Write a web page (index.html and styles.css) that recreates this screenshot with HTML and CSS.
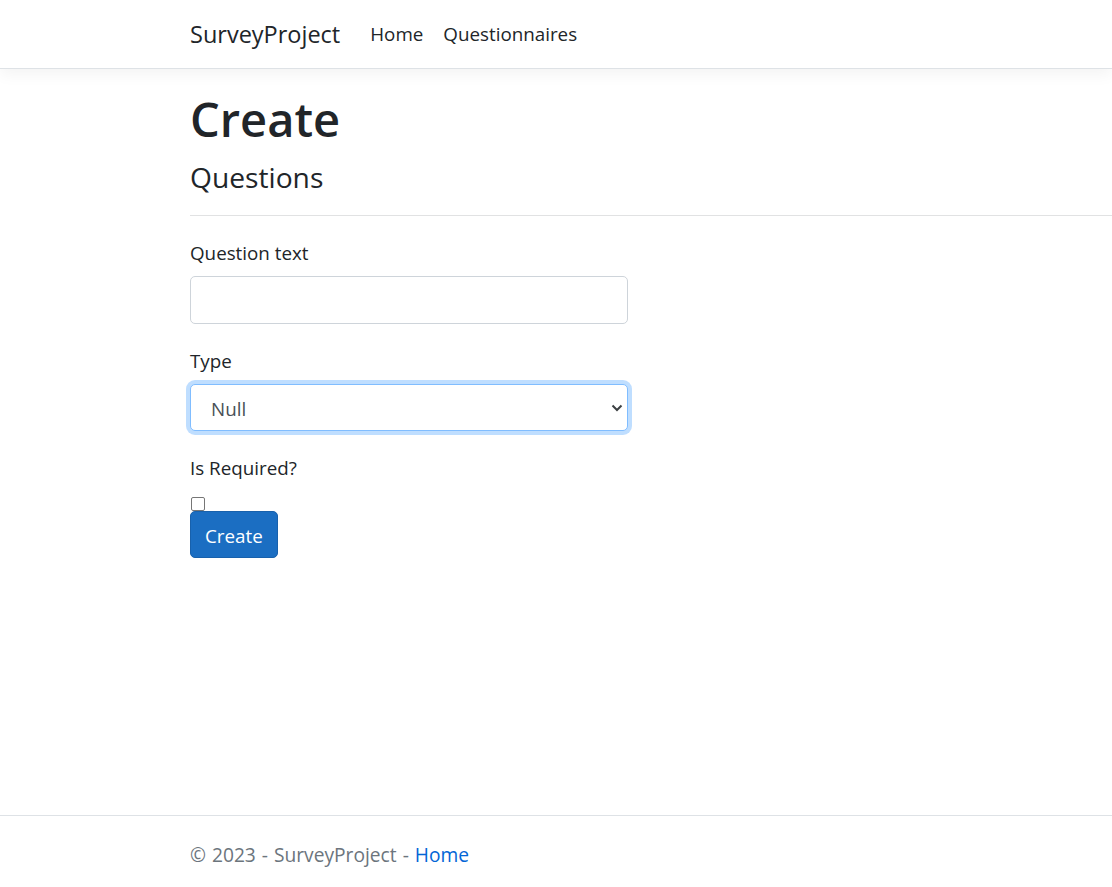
FILE: index.html
```html
<!DOCTYPE html>
<html lang="en">
<head>
<meta charset="utf-8">
<title>Create - SurveyProject</title>
<link rel="stylesheet" href="styles.css">
</head>
<body>
<header class="site-header">
  <nav class="navbar">
    <a class="brand" href="#">SurveyProject</a>
    <ul class="nav-links">
      <li><a class="nav-link" href="#">Home</a></li>
      <li><a class="nav-link" href="#">Questionnaires</a></li>
    </ul>
  </nav>
</header>
<main class="content">
  <h1 class="title">Create</h1>
  <h4 class="subtitle">Questions</h4>
  <hr class="divider">
  <form class="form">
    <div class="form-group">
      <label class="control-label" for="qtext">Question text</label>
      <input class="form-control" id="qtext" type="text">
    </div>
    <div class="form-group">
      <label class="control-label" for="qtype">Type</label>
      <div class="select-wrap">
        <select class="form-control select focused" id="qtype">
          <option>Null</option>
        </select>
        <svg class="chevron" width="12" height="8" viewBox="0 0 12 8"><path d="M1.5 1.5 L6 6 L10.5 1.5" fill="none" stroke="#3c4043" stroke-width="2"/></svg>
      </div>
    </div>
    <div class="form-group last">
      <label class="control-label" for="qreq">Is Required?</label>
      <input class="checkbox" id="qreq" type="checkbox">
      <button class="btn-primary" type="button">Create</button>
    </div>
  </form>
</main>
<footer class="footer">
  <div class="footer-inner">© 2023 - SurveyProject - <a class="footer-link" href="#">Home</a></div>
</footer>
</body>
</html>
```
FILE: styles.css
```css
* { box-sizing: border-box; }
html, body { margin: 0; padding: 0; }
body {
  font-family: "Segoe UI", "Open Sans", "Liberation Sans", sans-serif;
  font-size: 18.8px;
  line-height: 30px;
  color: #212529;
  background: #fff;
  min-height: 100vh;
  display: flex;
  flex-direction: column;
}
a { text-decoration: none; }

.site-header {
  background: #fff;
  border-bottom: 1px solid #dee2e6;
  box-shadow: 0 5px 15px rgba(0,0,0,0.05);
}
.navbar {
  height: 68px;
  display: flex;
  align-items: center;
  padding-left: 190px;
}
.brand {
  font-size: 23.5px;
  color: #212529;
  margin-right: 20px;
  line-height: 37px;
}
.nav-links {
  list-style: none;
  margin: 0;
  padding: 0;
  display: flex;
}
.nav-link {
  display: block;
  padding: 0 10px;
  color: #212529;
  font-size: 18.8px;
}

.content {
  padding-left: 190px;
  padding-top: 20px;
  flex: 1;
}
.title {
  font-size: 47px;
  font-weight: 600;
  line-height: 60px;
  margin: 0 0 10px;
}
.subtitle {
  font-size: 28.2px;
  font-weight: 500;
  line-height: 36px;
  margin: 0 0 20px;
}
.divider {
  margin: 0 0 20px;
  border: 0;
  border-top: 1px solid #e1e2e3;
}
.form { width: 438px; }
.form-group { margin-bottom: 20px; }
.control-label {
  display: inline-block;
  padding-top: 2px;
  margin-bottom: 8px;
}
.form-control {
  display: block;
  width: 100%;
  height: 47.5px;
  padding: 7.5px 15px;
  font: inherit;
  color: #495057;
  background: #fff;
  border: 1px solid #ced4da;
  border-radius: 5px;
}
.select-wrap { position: relative; }
.select {
  appearance: none;
  -webkit-appearance: none;
  padding-left: 20px;
  padding-top: 9px;
}
.select.focused {
  border-color: #80bdff;
  box-shadow: 0 0 0 4px rgba(0,123,255,0.25);
  outline: none;
}
.chevron {
  position: absolute;
  right: 5px;
  top: 20px;
}
.checkbox {
  display: block;
  appearance: none;
  -webkit-appearance: none;
  width: 14px;
  height: 14px;
  margin: 6px 0 0 1px;
  border: 1px solid #767676;
  border-radius: 2px;
  background: #fff;
}
.btn-primary {
  display: inline-block;
  font: inherit;
  color: #fff;
  background: #1b6ec2;
  border: 1px solid #1861ac;
  border-radius: 5px;
  padding: 9px 14px 6px;
  line-height: 30px;
  height: 47px;
}

.footer {
  border-top: 1px solid #dee2e6;
  height: 72px;
  color: #6c757d;
}
.footer-inner {
  padding-left: 190px;
  padding-top: 24px;
  font-size: 19.2px;
  word-spacing: 1px;
}
.footer-link { color: #0366d6; }
```
